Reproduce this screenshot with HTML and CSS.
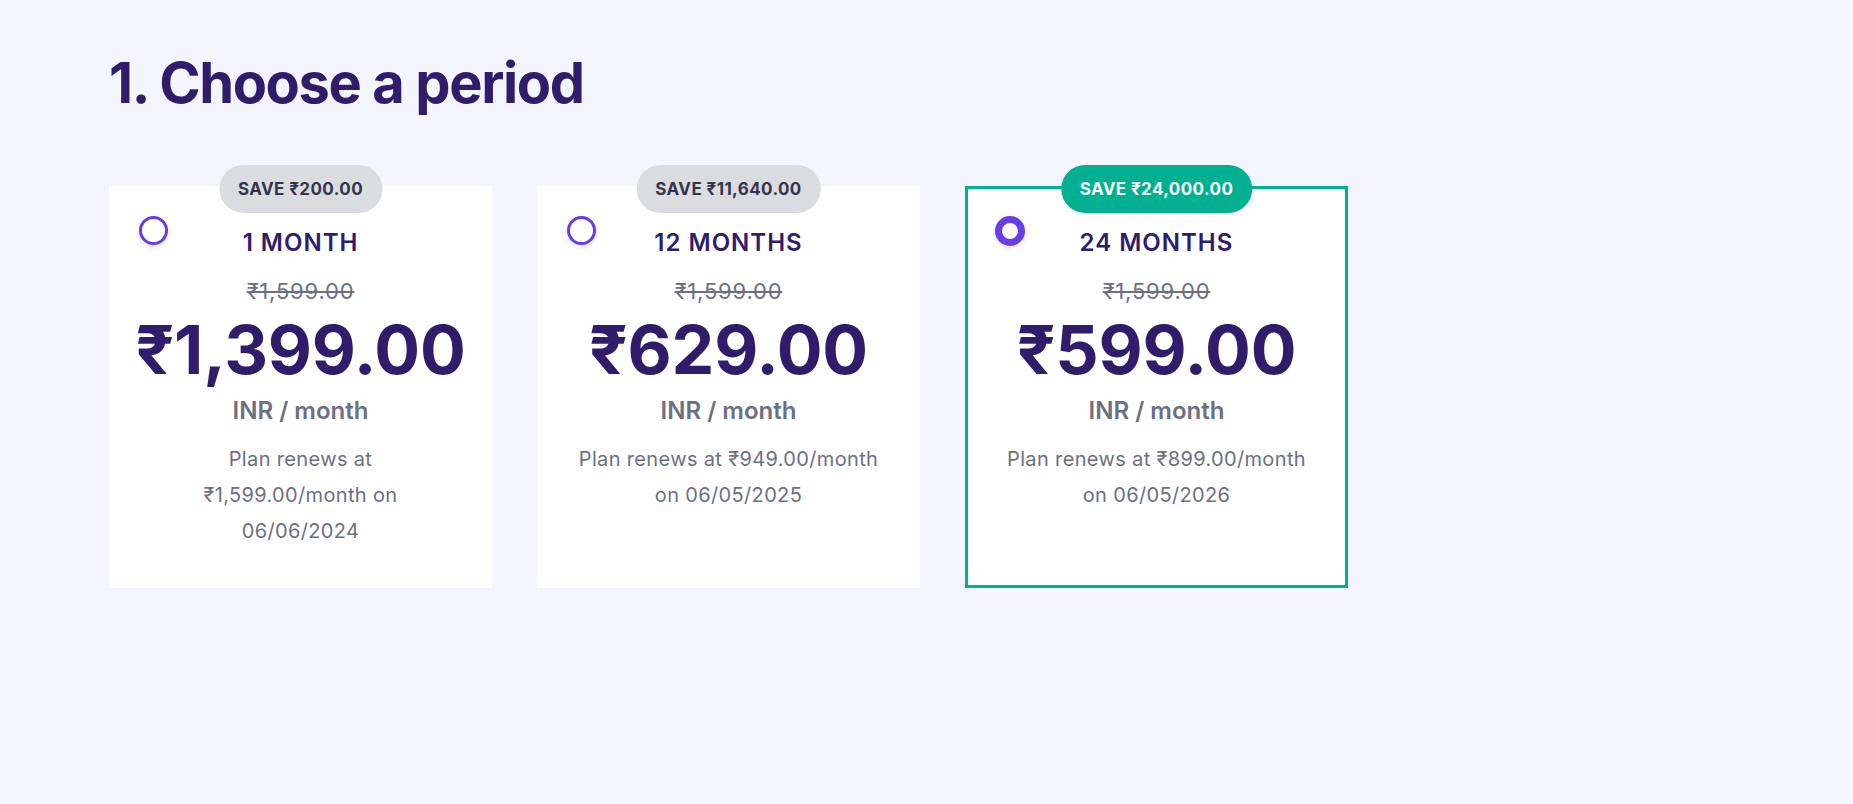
FILE: index.html
```html
<!DOCTYPE html>
<html lang="en">
<head>
<meta charset="utf-8">
<title>Choose a period</title>
<link rel="stylesheet" href="styles.css">
</head>
<body>
<main class="page">
  <h1 class="heading">1. Choose a period</h1>
  <div class="periods">
    <div class="card">
      <span class="badge">SAVE ₹200.00</span>
      <div class="card-head">
        <span class="radio"></span>
        <span class="title">1 MONTH</span>
      </div>
      <div class="old-price">₹1,599.00</div>
      <div class="price">₹1,399.00</div>
      <div class="unit">INR / month</div>
      <p class="renew">Plan renews at ₹1,599.00/month on 06/06/2024</p>
    </div>
    <div class="card">
      <span class="badge">SAVE ₹11,640.00</span>
      <div class="card-head">
        <span class="radio"></span>
        <span class="title">12 MONTHS</span>
      </div>
      <div class="old-price">₹1,599.00</div>
      <div class="price">₹629.00</div>
      <div class="unit">INR / month</div>
      <p class="renew">Plan renews at ₹949.00/month on 06/05/2025</p>
    </div>
    <div class="card card-selected">
      <span class="badge badge-green">SAVE ₹24,000.00</span>
      <div class="card-head">
        <span class="radio radio-checked"></span>
        <span class="title">24 MONTHS</span>
      </div>
      <div class="old-price">₹1,599.00</div>
      <div class="price">₹599.00</div>
      <div class="unit">INR / month</div>
      <p class="renew">Plan renews at ₹899.00/month on 06/05/2026</p>
    </div>
  </div>
</main>
</body>
</html>
```
FILE: styles.css
```css
* { box-sizing: border-box; }
html, body {
  margin: 0;
  background: #f4f5ff;
}
body {
  font-family: Inter, "Noto Sans", "DejaVu Sans", sans-serif;
  color: #2f1c6a;
  height: 804px;
  overflow: hidden;
}
.page {
  padding: 51px 0 0 109px;
}
.heading {
  margin: 0;
  font-size: 56px;
  line-height: 64px;
  font-weight: 700;
  color: #2f1c6a;
  letter-spacing: -1.4px;
}
.periods {
  display: flex;
  gap: 45px;
  margin-top: 71px;
}
.card {
  position: relative;
  width: 383px;
  height: 402px;
  background: #fff;
  border: 3px solid #fff;
  padding: 27px 27px 0;
  display: flex;
  flex-direction: column;
  align-items: center;
  text-align: center;
}
.card-selected {
  border-color: #00b090;
}
.badge {
  position: absolute;
  top: -24px;
  left: 50%;
  transform: translateX(-50%);
  height: 48px;
  padding: 0 19px;
  border-radius: 24px;
  background: #dadce0;
  color: #36344d;
  font-size: 17px;
  font-weight: 700;
  letter-spacing: 0.4px;
  line-height: 48px;
  white-space: nowrap;
}
.badge-green {
  background: #00b090;
  color: #fff;
}
.card-head {
  align-self: stretch;
  display: grid;
  grid-template-columns: 1fr auto 1fr;
  align-items: start;
}
.radio {
  justify-self: start;
  width: 29px;
  height: 29px;
  border-radius: 50%;
  border: 3px solid #673de6;
  background: #fff;
  box-shadow: 0 2px 5px rgba(103, 61, 230, 0.18);
}
.radio-checked {
  width: 30px;
  height: 30px;
  border-width: 7px;
}
.title {
  margin-top: 12px;
  font-size: 24px;
  line-height: 30px;
  font-weight: 600;
  letter-spacing: 1px;
  color: #2f1c6a;
}
.old-price {
  margin-top: 19px;
  font-size: 22px;
  line-height: 28px;
  letter-spacing: 0.8px;
  color: #6d7081;
  text-decoration: line-through;
}
.price {
  margin-top: 8px;
  font-size: 68px;
  line-height: 72px;
  font-weight: 700;
  color: #2f1c6a;
  letter-spacing: -0.2px;
}
.unit {
  margin-top: 11px;
  font-size: 24px;
  line-height: 30px;
  font-weight: 600;
  color: #6d7081;
}
.renew {
  margin: 15px 0 0;
  max-width: 306px;
  font-size: 20px;
  line-height: 36px;
  letter-spacing: 0.35px;
  color: #6d7081;
}
```
